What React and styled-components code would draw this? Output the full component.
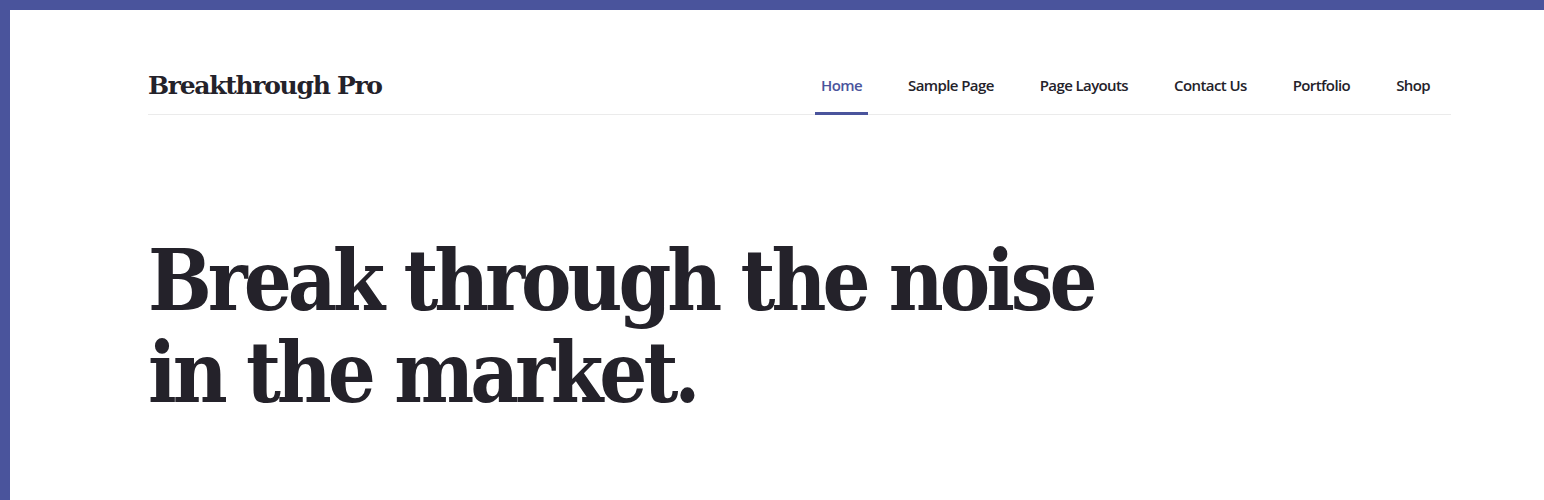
import React from 'react';
import styled, { createGlobalStyle } from 'styled-components';

const GlobalStyle = createGlobalStyle`
  html, body {
    margin: 0;
    padding: 0;
    background: #fff;
  }
  body {
    font-family: "DejaVu Serif", serif;
    color: #24222a;
  }
`;

const Frame = styled.div`
  height: 500px;
  box-sizing: border-box;
  border-top: 10px solid #4a549c;
  border-left: 10px solid #4a549c;
  background: #fff;
  overflow: hidden;
`;

const Container = styled.div`
  width: 1303px;
  margin-left: 138px;
`;

const Header = styled.header`
  display: flex;
  justify-content: space-between;
  height: 104px;
  border-bottom: 1px solid #ebebeb;
`;

const Logo = styled.a`
  font-family: "DejaVu Serif", serif;
  font-weight: 700;
  font-size: 25px;
  letter-spacing: -1.3px;
  color: #24222a;
  text-decoration: none;
  padding-top: 63px;
  line-height: 1;
`;

const Nav = styled.nav`
  display: flex;
  gap: 34px;
  padding-right: 15px;
`;

const NavItem = styled.a`
  display: flex;
  align-items: flex-end;
  padding: 0 6px 17px;
  font-family: "Open Sans", sans-serif;
  font-weight: 600;
  font-size: 15px;
  letter-spacing: -0.6px;
  color: ${p => (p.$active ? '#4a549c' : '#24222a')};
  text-decoration: none;
  border-bottom: 3px solid ${p => (p.$active ? '#4a549c' : 'transparent')};
  margin-bottom: -1px;
`;

const Hero = styled.section`
  padding-top: 120px;
`;

const Title = styled.h1`
  margin: 0;
  font-family: "DejaVu Serif Condensed", "DejaVu Serif", serif;
  font-stretch: condensed;
  font-weight: 700;
  font-size: 84px;
  line-height: 92px;
  letter-spacing: -4px;
  color: #24222a;
`;

const links = ['Home', 'Sample Page', 'Page Layouts', 'Contact Us', 'Portfolio', 'Shop'];

export default function App() {
  return (
    <>
      <GlobalStyle />
      <Frame>
        <Container>
          <Header>
            <Logo href="#">Breakthrough Pro</Logo>
            <Nav>
              {links.map((l, i) => (
                <NavItem key={l} href="#" $active={i === 0}>
                  {l}
                </NavItem>
              ))}
            </Nav>
          </Header>
          <Hero>
            <Title>
              Break through the noise
              <br />
              in the market.
            </Title>
          </Hero>
        </Container>
      </Frame>
    </>
  );
}
